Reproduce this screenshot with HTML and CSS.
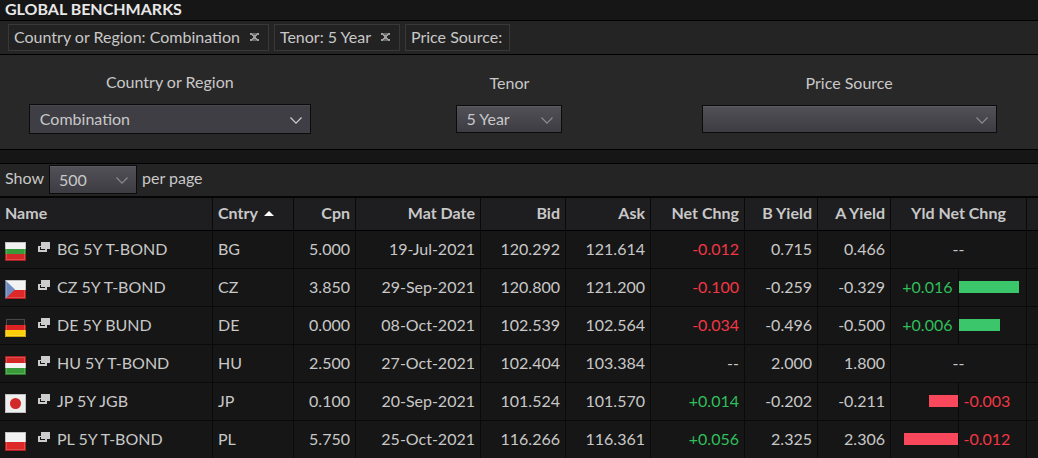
FILE: index.html
```html
<!DOCTYPE html>
<html lang="en">
<head>
<meta charset="utf-8">
<title>Global Benchmarks</title>
<link rel="stylesheet" href="styles.css">
</head>
<body>
<svg class="defs" aria-hidden="true">
  <defs>
    <linearGradient id="gloss" x1="0" y1="0" x2="0" y2="1">
      <stop offset="0" stop-color="#fff" stop-opacity=".3"/>
      <stop offset=".5" stop-color="#fff" stop-opacity=".06"/>
      <stop offset=".55" stop-color="#000" stop-opacity=".02"/>
      <stop offset="1" stop-color="#000" stop-opacity=".16"/>
    </linearGradient>
    <symbol id="chevron" viewBox="0 0 14 9"><path d="M1.5 1.5 7 7.2 12.5 1.5" fill="none" stroke="currentColor" stroke-width="1.2"/></symbol>
    <symbol id="remove" viewBox="0 0 9 8"><path d="M0 0h9v2H7v1H6v2h1v1h2v2H0V6h2V5h1V3H2V2H0z" fill="#666"/><path d="M0 0h2v1h1v1h3V1h1V0h2v2H7v1H6v2h1v1h2v2H7V7H6V6H3v1H2v1H0V6h2V5h1V3H2V2H0z" fill="currentColor"/></symbol>
    <symbol id="window" viewBox="0 0 12 10"><path d="M3 0h9v7H3z" fill="#ccc"/><path d="M0 4h3v1H2v3h5V7h2v3H0z" fill="#ccc"/></symbol>
    <symbol id="frame" viewBox="0 0 21 19"><path d="M0 0h21v19H0z" fill="url(#gloss)"/><path d="M.5.5h20v18H.5z" fill="none" stroke="#000" stroke-opacity=".2"/><path d="M1.5 1.5h18v16h-18z" fill="none" stroke="#fff" stroke-opacity=".18"/></symbol>
  </defs>
</svg>

<header class="title-bar"><h1 class="title">GLOBAL BENCHMARKS</h1></header>

<div class="chips">
  <span class="chip">Country or Region: Combination <button class="chip-remove" aria-label="Remove country filter"><svg class="remove-icon"><use href="#remove"/></svg></button></span>
  <span class="chip">Tenor: 5 Year <button class="chip-remove" aria-label="Remove tenor filter"><svg class="remove-icon"><use href="#remove"/></svg></button></span>
  <span class="chip">Price Source:</span>
</div>

<form class="filters">
  <div class="filter">
    <label for="country">Country or Region</label>
    <div class="picker picker-country picker-active">
      <select id="country" class="select"><option>Combination</option></select>
      <svg class="chevron" aria-hidden="true"><use href="#chevron"/></svg>
    </div>
  </div>
  <div class="filter">
    <label for="tenor">Tenor</label>
    <div class="picker picker-tenor">
      <select id="tenor" class="select"><option>5 Year</option></select>
      <svg class="chevron" aria-hidden="true"><use href="#chevron"/></svg>
    </div>
  </div>
  <div class="filter">
    <label for="source">Price Source</label>
    <div class="picker picker-source">
      <select id="source" class="select"><option></option></select>
      <svg class="chevron" aria-hidden="true"><use href="#chevron"/></svg>
    </div>
  </div>
</form>

<div class="pager">
  <label class="pager-text" for="size">Show</label>
  <div class="picker picker-size">
    <select id="size" class="select"><option>500</option></select>
    <svg class="chevron" aria-hidden="true"><use href="#chevron"/></svg>
  </div>
  <span class="pager-text">per page</span>
</div>

<table class="bonds">
  <colgroup>
    <col><col class="col-country"><col class="col-coupon"><col class="col-date"><col class="col-price"><col class="col-price"><col class="col-change"><col class="col-yield"><col class="col-yield"><col class="col-bar"><col class="col-end">
  </colgroup>
  <thead>
    <tr><th class="text">Name</th><th class="text">Cntry <svg class="sort" viewBox="0 0 10 5" aria-hidden="true"><path d="M5 0l5 5H0z" fill="#fff"/></svg></th><th>Cpn</th><th>Mat Date</th><th>Bid</th><th>Ask</th><th>Net Chng</th><th>B Yield</th><th>A Yield</th><th class="center">Yld Net Chng</th><th></th></tr>
  </thead>
  <tbody>
    <tr>
      <td class="text"><div class="name"><svg class="flag" viewBox="0 0 21 19"><path fill="#f2f2f2" d="M0 0h21v7H0z"/><path fill="#389a38" d="M0 7h21v5H0z"/><path fill="#d22828" d="M0 12h21v7H0z"/><use href="#frame"/></svg><svg class="window"><use href="#window"/></svg><span>BG 5Y T-BOND</span></div></td>
      <td class="text">BG</td><td>5.000</td><td>19-Jul-2021</td><td>120.292</td><td>121.614</td><td class="down">-0.012</td><td>0.715</td><td>0.466</td><td class="center">--</td><td></td>
    </tr>
    <tr>
      <td class="text"><div class="name"><svg class="flag" viewBox="0 0 21 19"><path fill="#f2f2f2" d="M0 0h21v10H0z"/><path fill="#dc2828" d="M0 10h21v9H0z"/><path fill="#6f8cbf" d="M0 0l10 9.500L0 19z"/><use href="#frame"/></svg><svg class="window"><use href="#window"/></svg><span>CZ 5Y T-BOND</span></div></td>
      <td class="text">CZ</td><td>3.850</td><td>29-Sep-2021</td><td>120.800</td><td>121.200</td><td class="down">-0.100</td><td>-0.259</td><td>-0.329</td>
      <td class="bar-cell"><div class="halves"><div class="half left up">+0.016</div><div class="half"><div class="bar bar-up" style="width:90%"></div></div></div></td><td></td>
    </tr>
    <tr>
      <td class="text"><div class="name"><svg class="flag" viewBox="0 0 21 19"><path fill="#202020" d="M0 0h21v7H0z"/><path fill="#dc2222" d="M0 7h21v5H0z"/><path fill="#ffcf08" d="M0 12h21v7H0z"/><use href="#frame"/></svg><svg class="window"><use href="#window"/></svg><span>DE 5Y BUND</span></div></td>
      <td class="text">DE</td><td>0.000</td><td>08-Oct-2021</td><td>102.539</td><td>102.564</td><td class="down">-0.034</td><td>-0.496</td><td>-0.500</td>
      <td class="bar-cell"><div class="halves"><div class="half left up">+0.006</div><div class="half"><div class="bar bar-up" style="width:61%"></div></div></div></td><td></td>
    </tr>
    <tr>
      <td class="text"><div class="name"><svg class="flag" viewBox="0 0 21 19"><path fill="#d22828" d="M0 0h21v7H0z"/><path fill="#f4f4f4" d="M0 7h21v5H0z"/><path fill="#389a38" d="M0 12h21v7H0z"/><use href="#frame"/></svg><svg class="window"><use href="#window"/></svg><span>HU 5Y T-BOND</span></div></td>
      <td class="text">HU</td><td>2.500</td><td>27-Oct-2021</td><td>102.404</td><td>103.384</td><td>--</td><td>2.000</td><td>1.800</td><td class="center">--</td><td></td>
    </tr>
    <tr>
      <td class="text"><div class="name"><svg class="flag" viewBox="0 0 21 19"><path fill="#eee" d="M0 0h21v19H0z"/><circle cx="10.500" cy="9.500" r="5.500" fill="#d22828"/><use href="#frame"/></svg><svg class="window"><use href="#window"/></svg><span>JP 5Y JGB</span></div></td>
      <td class="text">JP</td><td>0.100</td><td>20-Sep-2021</td><td>101.524</td><td>101.570</td><td class="up">+0.014</td><td>-0.202</td><td>-0.211</td>
      <td class="bar-cell"><div class="halves"><div class="half left"><div class="bar bar-down" style="width:43%"></div></div><div class="half right down">-0.003</div></div></td><td></td>
    </tr>
    <tr>
      <td class="text"><div class="name"><svg class="flag" viewBox="0 0 21 19"><path fill="#f2f2f2" d="M0 0h21v10H0z"/><path fill="#dc2828" d="M0 10h21v9H0z"/><use href="#frame"/></svg><svg class="window"><use href="#window"/></svg><span>PL 5Y T-BOND</span></div></td>
      <td class="text">PL</td><td>5.750</td><td>25-Oct-2021</td><td>116.266</td><td>116.361</td><td class="up">+0.056</td><td>2.325</td><td>2.306</td>
      <td class="bar-cell"><div class="halves"><div class="half left"><div class="bar bar-down" style="width:80%"></div></div><div class="half right down">-0.012</div></div></td><td></td>
    </tr>
  </tbody>
</table>
</body>
</html>
```

FILE: styles.css
```css
* { box-sizing: border-box; }

body {
  margin: 0;
  background: #161616;
  color: #c8c8c8;
  font: 16px/20px Lato, "Liberation Sans", sans-serif;
}

.defs { display: none; }

.title-bar { padding: 0 5px 2px; border-bottom: 1px solid #000; }
.title { margin: 0; color: #e8e8e8; font-size: 16px; line-height: 18px; font-weight: 700; }

.chips {
  display: flex;
  gap: 5px;
  padding: 3px 8px;
  background: #242424;
  border-bottom: 1px solid #000;
}
.chip {
  display: flex;
  align-items: center;
  padding: 2px 7px 3px 5px;
  height: 27px;
  border: 1px solid #383838;
  background: #222;
}
.chip-remove {
  display: flex;
  margin-left: 8px;
  padding: 2px;
  border: 0;
  background: none;
  color: #a0a0a0;
}
.remove-icon { width: 9px; height: 8px; }

.filters {
  display: grid;
  grid-template-columns: repeat(3, 1fr);
  align-items: center;
  padding: 17px 19px 15px 0;
  background: #282828;
  border-bottom: 1px solid #000;
}
.filter { display: flex; flex-direction: column; align-items: center; gap: 12px; }

.picker { display: grid; height: 28px; align-items: center; }
.picker-country { width: 282px; height: 30px; }
.picker-tenor { width: 106px; }
.picker-source { width: 295px; }
.picker-size { width: 88px; height: 29px; }
.select {
  grid-area: 1 / 1;
  appearance: none;
  width: 100%;
  height: 100%;
  padding: 0 9px;
  border: 1px solid #0b0b0b;
  border-radius: 0;
  background: linear-gradient(#515157, #3d3c43);
  box-shadow: inset 0 1px #5a5a60;
  color: #c8c8c8;
  font: inherit;
}
.chevron {
  grid-area: 1 / 1;
  justify-self: end;
  width: 14px;
  height: 9px;
  margin: 2px 8px 0 0;
  color: #8b8b90;
  pointer-events: none;
}
.picker-active .select { padding: 0 10px; background: #3f3e45; box-shadow: inset 0 1px #48484e; }
.picker-active .chevron { color: #d0d0d0; }

.pager {
  display: flex;
  align-items: center;
  gap: 5px;
  margin-top: 13px;
  padding: 1px 5px 2px;
  background: #242424;
  border-top: 1px solid #000;
}
.pager-text { padding-bottom: 4px; }

.bonds {
  width: 100%;
  table-layout: fixed;
  border-collapse: separate;
  border-spacing: 0;
  border-top: 2px solid #050505;
}
.col-country { width: 81px; }
.col-coupon { width: 62px; }
.col-date { width: 125px; }
.col-price { width: 85px; }
.col-change { width: 94px; }
.col-yield { width: 73px; }
.col-bar { width: 136px; }
.col-end { width: 11px; }

th, td {
  padding: 0 5px 2px;
  border-right: 1px solid #0a0a0a;
  border-bottom: 1px solid #0a0a0a;
  text-align: right;
  white-space: nowrap;
}
th { height: 33px; background: #1e1e20; border-bottom-color: #000; font-weight: 700; }
td { height: 38px; }
th:last-child, td:last-child { border-right: 0; }
.text { text-align: left; }
.center { text-align: center; }
.up { color: #2fbf5b; }
.down { color: #f23645; }
.sort { width: 10px; height: 5px; margin: 0 0 2px 3px; vertical-align: middle; }

.name { display: flex; align-items: center; padding-top: 1px; }
.flag { width: 21px; height: 19px; margin: 4px 12px 0 0; }
.window { width: 12px; height: 10px; margin: 0 7px 4px 0; }

.bar-cell { padding: 0; }
.halves { display: grid; grid-template-columns: 1fr 1fr; height: 37px; }
.half { display: flex; align-items: center; padding-bottom: 1px; }
.left { justify-content: flex-end; border-right: 1px solid #0a0a0a; }
.half.up { padding-right: 5px; }
.half.right { padding-left: 5px; }
.bar { height: 12px; }
.bar-up { background: #3cc66c; }
.bar-down { background: #f9475c; }
```
